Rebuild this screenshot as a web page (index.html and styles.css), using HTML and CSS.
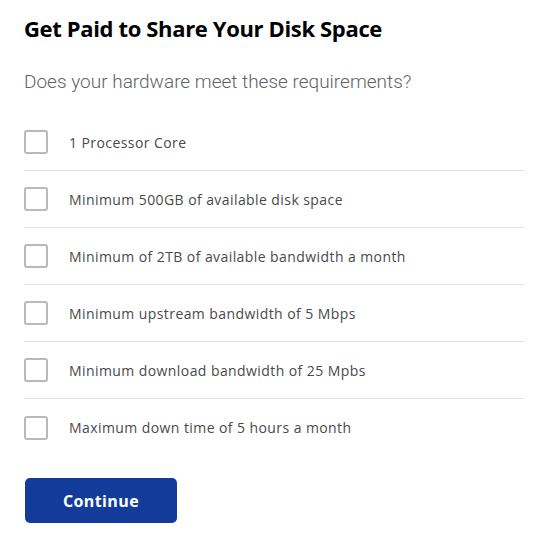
FILE: index.html
```html
<!DOCTYPE html>
<html lang="en">
<head>
  <meta charset="UTF-8" />
  <meta name="viewport" content="width=device-width, initial-scale=1.0"/>
  <title>Get Paid to Share Your Disk Space</title>
  <link rel="stylesheet" href="styles.css">
</head>
<body>
  <div class="form-container">
    <h2>Get Paid to Share Your Disk Space</h2>
    <p class="subtitle">Does your hardware meet these requirements?</p>
    <form id="requisitos">
      <label class="item"><input type="checkbox" /><span class="box"></span>1 Processor Core</label>
      <label class="item"><input type="checkbox" /><span class="box"></span>Minimum 500GB of available disk space</label>
      <label class="item"><input type="checkbox" /><span class="box"></span>Minimum of 2TB of available bandwidth a month</label>
      <label class="item"><input type="checkbox" /><span class="box"></span>Minimum upstream bandwidth of 5 Mbps</label>
      <label class="item"><input type="checkbox" /><span class="box"></span>Minimum download bandwidth of 25 Mpbs</label>
      <label class="item"><input type="checkbox" /><span class="box"></span>Maximum down time of 5 hours a month</label>
      <button type="submit">Continue</button>
    </form>
  </div>
</body>
</html>
```

FILE: styles.css
```css
* {
  box-sizing: border-box;
  font-family: 'Open Sans', 'Liberation Sans', sans-serif;
}

body {
  background-color: #ffffff;
  margin: 0;
  padding: 0;
}

.form-container {
  padding: 14px 24px 0 24px;
  width: 548px;
}

h2 {
  margin: 0;
  font-size: 22px;
  line-height: 28px;
  font-weight: 700;
  color: #000;
  letter-spacing: -0.35px;
}

.subtitle {
  margin: 26px 0 18px 0;
  font-family: Roboto, sans-serif;
  font-weight: 300;
  font-size: 19px;
  line-height: 28px;
  color: #5f6368;
}

.item {
  display: flex;
  align-items: center;
  gap: 21px;
  height: 57px;
  width: 500px;
  border-bottom: 1px solid #e2e2e2;
  font-size: 14px;
  letter-spacing: 0.42px;
  color: #4a4a4a;
  cursor: pointer;
}

.item:last-of-type {
  border-bottom: none;
}

.item input {
  display: none;
}

.box {
  width: 24px;
  height: 24px;
  border: 2px solid #b9b9b9;
  border-radius: 3px;
  flex-shrink: 0;
}

.item input:checked + .box {
  background-color: #133c9a;
  border-color: #133c9a;
}

button {
  margin-top: 22px;
  margin-left: 1px;
  width: 152px;
  height: 45px;
  background-color: #133c9a;
  border: none;
  border-radius: 5px;
  color: white;
  font-size: 16px;
  font-weight: 700;
  letter-spacing: 0.4px;
  cursor: pointer;
}

button:hover {
  background-color: #0e2f7a;
}
```
